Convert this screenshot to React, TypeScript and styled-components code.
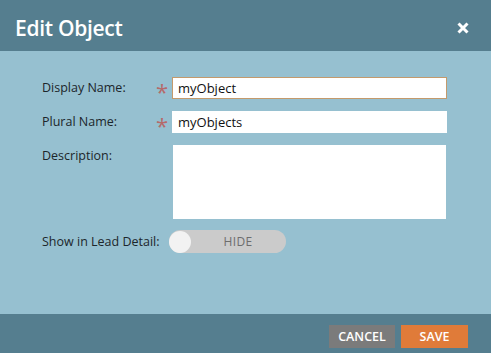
import React from "react";
import styled, { createGlobalStyle } from "styled-components";

const Global = createGlobalStyle`
  html, body { margin: 0; padding: 0; }
  body { font-family: "Open Sans", "Liberation Sans", sans-serif; }
  * { box-sizing: border-box; }
`;

const Dialog = styled.div`
  width: 491px;
  height: 353px;
  display: flex;
  flex-direction: column;
  background: #96c0d0;
  overflow: hidden;
`;

const Header = styled.div`
  height: 51px;
  flex: none;
  background: #557e8f;
  display: flex;
  align-items: center;
  justify-content: space-between;
  padding: 0 22px 0 15px;
`;

const Title = styled.h1`
  margin: 0;
  font-size: 21px;
  font-weight: 600;
  color: #ffffff;
  letter-spacing: -0.3px;
  position: relative;
  top: 2px;
`;

const Close = styled.button`
  border: 0;
  background: none;
  padding: 0;
  width: 12px;
  height: 12px;
  display: flex;
  cursor: pointer;
  position: relative;
  top: 2px;
`;

const Body = styled.div`
  flex: 1;
  padding: 26px 0 0 42px;
  display: grid;
  grid-template-columns: 119px 11px 275px;
  grid-auto-rows: min-content;
  row-gap: 12px;
  align-items: start;
`;

const Label = styled.label`
  font-size: 12.5px;
  color: #1c262b;
  line-height: 22px;
  white-space: nowrap;
`;

const Star = styled.span`
  color: #b56a6a;
  font-size: 22px;
  line-height: 22px;
  height: 22px;
  padding-top: 3px;
  margin-left: -5px;
  overflow: visible;
`;

const Input = styled.input<{ $focus?: boolean }>`
  width: 275px;
  height: 22px;
  border: 1px solid ${(p) => (p.$focus ? "#c49a6c" : "#ffffff")};
  background: #fff;
  font-family: inherit;
  font-size: 13px;
  color: #111;
  padding: 0 5px;
  outline: none;
`;

const TextArea = styled.textarea`
  width: 273px;
  height: 74px;
  border: 0;
  background: #fff;
  resize: none;
  outline: none;
  margin-left: 1px;
`;

const Toggle = styled.div`
  width: 117px;
  height: 23px;
  margin-left: -3px;
  margin-top: -1px;
  border-radius: 12px;
  background: #cbcbcb;
  display: flex;
  align-items: center;
  padding: 0 1px 0 0;
`;

const Knob = styled.span`
  width: 22px;
  height: 22px;
  border-radius: 50%;
  background: #f2f2f2;
  flex: none;
`;

const ToggleText = styled.span`
  flex: 1;
  text-align: center;
  font-size: 12px;
  color: #6d6d6d;
  letter-spacing: 0.3px;
`;

const Footer = styled.div`
  height: 39px;
  flex: none;
  background: #557e8f;
  display: flex;
  justify-content: flex-end;
  align-items: flex-start;
  gap: 6px;
  padding: 11px 23px 0 0;
`;

const Button = styled.button<{ $primary?: boolean }>`
  height: 23px;
  width: ${(p) => (p.$primary ? 67 : 66)}px;
  border: 0;
  background: ${(p) => (p.$primary ? "#e07b39" : "#7b7b7b")};
  color: #fff;
  font-family: inherit;
  font-size: 12.5px;
  font-weight: 600;
  text-transform: uppercase;
  padding: 0;
  cursor: pointer;
`;

const Empty = styled.span``;

export default function App() {
  return (
    <>
      <Global />
      <Dialog>
        <Header>
          <Title>Edit Object</Title>
          <Close aria-label="Close">
            <svg width="12" height="12" viewBox="0 0 12 12">
              <path d="M1.5 1.5 L10.5 10.5 M10.5 1.5 L1.5 10.5" stroke="#fff" strokeWidth="3" strokeLinecap="butt" />
            </svg>
          </Close>
        </Header>
        <Body>
          <Label>Display Name:</Label>
          <Star>*</Star>
          <Input $focus defaultValue="myObject" />

          <Label>Plural Name:</Label>
          <Star>*</Star>
          <Input defaultValue="myObjects" />

          <Label>Description:</Label>
          <Empty />
          <TextArea />

          <Label>Show in Lead Detail:</Label>
          <Empty />
          <Toggle>
            <Knob />
            <ToggleText>HIDE</ToggleText>
          </Toggle>
        </Body>
        <Footer>
          <Button>Cancel</Button>
          <Button $primary>Save</Button>
        </Footer>
      </Dialog>
    </>
  );
}
